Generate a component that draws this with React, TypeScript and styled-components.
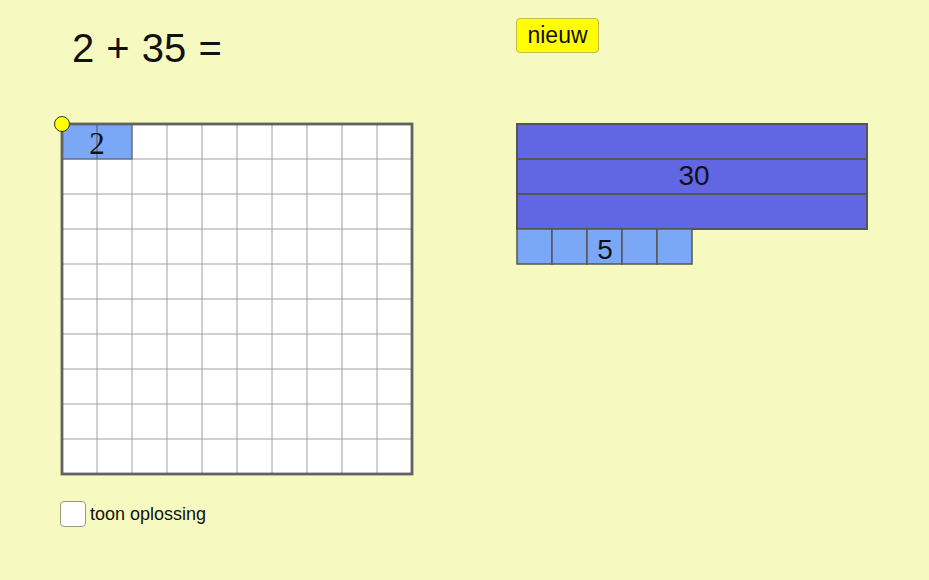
import React from 'react'
import styled, { createGlobalStyle } from 'styled-components'

const GlobalStyle = createGlobalStyle`
  html, body {
    margin: 0;
    padding: 0;
    background: #f6fac0;
  }
  body {
    font-family: 'Liberation Sans', Arial, sans-serif;
  }
`

const CELL = 35
const N = 10

const Page = styled.div`
  width: 929px;
  height: 580px;
  box-sizing: border-box;
  padding-left: 61px;
  display: grid;
  grid-template-columns: 352px 352px;
  grid-template-rows: 123px 352px auto;
  align-content: start;
  column-gap: 103px;
  background: #f6fac0;
  overflow: hidden;
`

const Equation = styled.div`
  padding-top: 25px;
  padding-left: 11px;
  font-size: 40px;
  line-height: 46px;
  color: #111;
  white-space: pre;
  word-spacing: 1px;
`

const TopRight = styled.div`
  padding-top: 18px;
`

const NewButton = styled.button`
  width: 83px;
  height: 35px;
  border: 1px solid #c4bc48;
  border-radius: 4px;
  background: #ffff00;
  font-family: 'Liberation Sans', Arial, sans-serif;
  font-size: 23px;
  color: #111;
  padding: 0;
  line-height: 33px;
  cursor: pointer;
`

const Board = styled.svg`
  display: block;
  overflow: visible;
`

const BarPanel = styled.svg`
  display: block;
  overflow: visible;
`

const CheckRow = styled.label`
  display: flex;
  align-items: center;
  align-self: start;
  gap: 4px;
  margin-top: 26px;
  margin-left: -1px;
  font-size: 18px;
  color: #111;
  grid-column: 1 / 2;
`

const Box = styled.span`
  width: 24px;
  height: 24px;
  border: 1px solid #9a9a80;
  border-radius: 4px;
  background: #fff;
  display: inline-block;
`

const HundredGrid = () => {
  const lines = []
  for (let i = 1; i < N; i++) {
    lines.push(
      <line key={'v' + i} x1={i * CELL} y1={0} x2={i * CELL} y2={N * CELL} stroke="#a0a0a0" strokeWidth={1} />,
      <line key={'h' + i} x1={0} y1={i * CELL} x2={N * CELL} y2={i * CELL} stroke="#a0a0a0" strokeWidth={1} />,
    )
  }
  return (
    <Board width={352} height={352} viewBox="-1 -1 352 352">
      <rect x={0} y={0} width={N * CELL} height={N * CELL} fill="#ffffff" />
      {lines}
      <rect x={0} y={0} width={2 * CELL} height={CELL} fill="#7ba8f6" stroke="#555" strokeWidth={1} />
      <line x1={CELL} y1={0} x2={CELL} y2={CELL} stroke="#555" strokeWidth={1} />
      <text x={CELL} y={30} textAnchor="middle" fontFamily="'Liberation Serif', serif" fontSize={31} fill="#111">
        2
      </text>
      <rect x={0} y={0} width={N * CELL} height={N * CELL} fill="none" stroke="#626262" strokeWidth={2.8} />
      <circle cx={0} cy={0} r={7.5} fill="#ffff00" stroke="#333" strokeWidth={1} />
    </Board>
  )
}

const TensBars = () => {
  const w = N * CELL
  return (
    <BarPanel width={352} height={142} viewBox="-1 -1 352 142">
      {[0, 1, 2].map((r) => (
        <rect key={r} x={0} y={r * CELL} width={w} height={CELL} fill="#6166e3" stroke="#555" strokeWidth={2} />
      ))}
      <text x={w / 2 + 2} y={61} textAnchor="middle" fontFamily="'Liberation Sans', sans-serif" fontSize={28} fill="#111">
        30
      </text>
      {[0, 1, 2, 3, 4].map((c) => (
        <rect key={c} x={c * CELL} y={3 * CELL} width={CELL} height={CELL} fill="#7ba8f6" stroke="#555" strokeWidth={1.5} />
      ))}
      <text x={2.5 * CELL + 0.5} y={3 * CELL + 30} textAnchor="middle" fontFamily="'Liberation Sans', sans-serif" fontSize={28} fill="#111">
        5
      </text>
    </BarPanel>
  )
}

export default function App() {
  return (
    <>
      <GlobalStyle />
      <Page>
        <Equation>2 + 35 =</Equation>
        <TopRight>
          <NewButton>nieuw</NewButton>
        </TopRight>
        <HundredGrid />
        <TensBars />
        <CheckRow>
          <Box />
          toon oplossing
        </CheckRow>
      </Page>
    </>
  )
}
